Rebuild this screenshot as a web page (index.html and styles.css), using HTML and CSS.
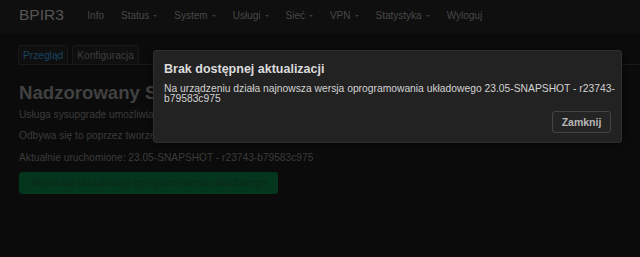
FILE: index.html
```html
<!DOCTYPE html>
<html lang="pl">
<head>
  <meta charset="UTF-8">
  <title>BPIR3 - Aktualizacja</title>
  <link rel="stylesheet" href="styles.css">
</head>
<body>
  <header class="topbar">
    <span class="brand">BPIR3</span>
    <nav class="menu">
      <span class="menu-item">Info</span>
      <span class="menu-item drop">Status</span>
      <span class="menu-item drop">System</span>
      <span class="menu-item drop">Usługi</span>
      <span class="menu-item drop">Sieć</span>
      <span class="menu-item drop">VPN</span>
      <span class="menu-item drop">Statystyka</span>
      <span class="menu-item">Wyloguj</span>
    </nav>
  </header>

  <main class="content">
    <ul class="tabs">
      <li class="tab active">Przegląd</li>
      <li class="tab">Konfiguracja</li>
    </ul>

    <h2 class="title">Nadzorowany Sysupgrade</h2>
    <p class="desc">Usługa sysupgrade umożliwia aktualizację oprogramowania układowego.</p>
    <p class="desc">Odbywa się to poprzez tworzenie obrazu na serwerze.</p>
    <p class="desc">Aktualnie uruchomione: 23.05-SNAPSHOT - r23743-b79583c975</p>
    <button class="btn-search">Wyszukaj aktualizację oprogramowania układowego</button>
  </main>

  <div class="modal">
    <h4 class="modal-title">Brak dostępnej aktualizacji</h4>
    <p class="modal-text">Na urządzeniu działa najnowsza wersja oprogramowania układowego 23.05-SNAPSHOT - r23743-b79583c975</p>
    <div class="modal-actions">
      <button class="btn-close">Zamknij</button>
    </div>
  </div>
</body>
</html>
```

FILE: styles.css
```css
body {
  margin: 0;
  background: #0b0b0b;
  color: #3b3b3b;
  font-family: 'Liberation Sans', Arial, sans-serif;
  font-size: 10.2px;
  height: 257px;
  overflow: hidden;
}

.topbar {
  box-sizing: border-box;
  height: 33px;
  padding: 0 0 3px 19px;
  display: flex;
  align-items: center;
  background: #0f0f0f;
}

.brand {
  font-size: 15.5px;
  color: #555;
  margin-right: 15px;
}

.menu {
  display: flex;
  align-items: center;
}

.menu-item {
  font-size: 10px;
  color: #484848;
  padding: 0 8.5px;
}

.drop::after {
  content: "";
  display: inline-block;
  margin-left: 4px;
  vertical-align: middle;
  border-left: 2.5px solid transparent;
  border-right: 2.5px solid transparent;
  border-top: 2.5px solid #3a3a3a;
}

.content {
  padding: 12px 0 0 18px;
}

.tabs {
  list-style: none;
  margin: 0;
  padding: 0;
  display: flex;
  gap: 4px;
  border-bottom: 1px solid #191919;
}

.tab {
  font-size: 10.2px;
  line-height: 12px;
  color: #3d3d3d;
  padding: 4px 4px 2px;
  border: 1px solid #191919;
  border-bottom: none;
  border-radius: 3px 3px 0 0;
  background: #0f0f0f;
}

.tab.active {
  color: #184461;
}

.title {
  margin: 17px 0 3.5px 1px;
  font-size: 18.6px;
  line-height: 22px;
  font-weight: bold;
  color: #414141;
  white-space: nowrap;
}

.desc {
  margin: 8.5px 0 0 1px;
  line-height: 13px;
  white-space: nowrap;
}

.title + .desc {
  margin-top: 0;
}

.btn-search {
  display: block;
  margin: 8px 0 0 1px;
  height: 22px;
  padding: 0 12px;
  border: none;
  border-radius: 3px;
  background: #04351d;
  color: #0c2818;
  font-family: inherit;
  font-size: 10.2px;
  white-space: nowrap;
}

.modal {
  position: absolute;
  left: 153px;
  top: 50px;
  box-sizing: border-box;
  width: 469px;
  height: 93px;
  padding: 11px 9px 0 10px;
  background: #222;
  border: 1px solid #2f2f2f;
  border-radius: 3px;
  box-shadow: 0 2px 6px rgba(0, 0, 0, 0.5);
}

.modal-title {
  margin: 0;
  font-size: 12.5px;
  line-height: 15px;
  font-weight: bold;
  color: #dcdcdc;
}

.modal-text {
  margin: 6.5px -8px 0 0;
  font-size: 10.3px;
  line-height: 10px;
  color: #d2d2d2;
}

.modal-actions {
  display: flex;
  justify-content: flex-end;
  margin: 7px 1px 0 0;
}

.btn-close {
  width: 59px;
  height: 22px;
  padding: 0;
  background: #242424;
  border: 1px solid #444;
  border-radius: 3px;
  color: #b8b8b8;
  font-family: inherit;
  font-size: 10.5px;
  font-weight: bold;
}
```
